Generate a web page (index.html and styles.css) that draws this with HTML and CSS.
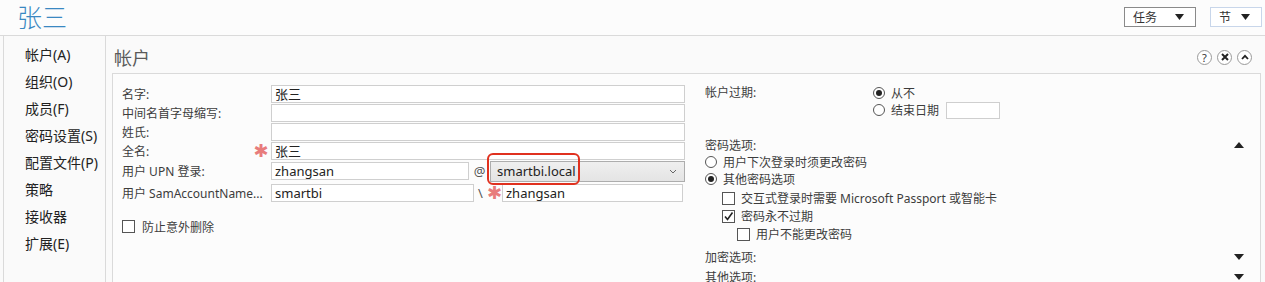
FILE: index.html
```html
<!DOCTYPE html>
<html lang="zh-CN">
<head>
  <meta charset="UTF-8" />
  <title>张三 - 属性</title>
  <link rel="stylesheet" href="styles.css">
</head>
<body>

  <header class="topbar">
    <h1 class="user-name">张三</h1>
    <div class="top-actions">
      <button class="drop drop-task">任务
        <svg class="tri" width="9" height="6" viewBox="0 0 9 6"><polygon points="0,0 9,0 4.5,6" /></svg>
      </button>
      <button class="drop drop-section">节
        <svg class="tri" width="9" height="6" viewBox="0 0 9 6"><polygon points="0,0 9,0 4.5,6" /></svg>
      </button>
    </div>
  </header>

  <div class="main">
    <nav class="side-nav">
      <a class="nav-item">帐户(A)</a>
      <a class="nav-item">组织(O)</a>
      <a class="nav-item">成员(F)</a>
      <a class="nav-item">密码设置(S)</a>
      <a class="nav-item">配置文件(P)</a>
      <a class="nav-item">策略</a>
      <a class="nav-item">接收器</a>
      <a class="nav-item">扩展(E)</a>
    </nav>

    <section class="content">
      <div class="content-head">
        <h2 class="section-title">帐户</h2>
        <div class="head-icons">
          <span class="circle-btn help">?</span>
          <span class="circle-btn">
            <svg width="8" height="8" viewBox="0 0 8 8"><path d="M1 1 L7 7 M7 1 L1 7" stroke="#222" stroke-width="2" /></svg>
          </span>
          <span class="circle-btn">
            <svg width="8" height="6" viewBox="0 0 8 6"><path d="M1 5 L4 1.8 L7 5" stroke="#222" stroke-width="1.8" fill="none" /></svg>
          </span>
        </div>
      </div>

      <div class="panel">
        <div class="col-left">
          <div class="form-row">
            <label class="field-label">名字:</label>
            <span class="req"></span>
            <input class="text-input wide" type="text" value="张三">
          </div>
          <div class="form-row">
            <label class="field-label">中间名首字母缩写:</label>
            <span class="req"></span>
            <input class="text-input wide" type="text" value="">
          </div>
          <div class="form-row">
            <label class="field-label">姓氏:</label>
            <span class="req"></span>
            <input class="text-input wide" type="text" value="">
          </div>
          <div class="form-row">
            <label class="field-label">全名:</label>
            <span class="req">✱</span>
            <input class="text-input wide" type="text" value="张三">
          </div>
          <div class="form-row tall">
            <label class="field-label">用户 UPN 登录:</label>
            <span class="req"></span>
            <input class="text-input upn" type="text" value="zhangsan">
            <span class="sep at">@</span>
            <div class="combo-wrap">
              <div class="combo">
                <span>smartbi.local</span>
                <svg width="8" height="5" viewBox="0 0 8 5"><path d="M1 1 L4 4 L7 1" stroke="#666" stroke-width="1" fill="none" /></svg>
              </div>
              <div class="highlight"></div>
            </div>
          </div>
          <div class="form-row tall">
            <label class="field-label">用户 SamAccountName...</label>
            <span class="req"></span>
            <input class="text-input domain" type="text" value="smartbi">
            <span class="sep slash">\</span>
            <span class="req small-req">✱</span>
            <input class="text-input sam" type="text" value="zhangsan">
          </div>
          <div class="form-row check-row protect">
            <span class="checkbox"></span>
            <span class="check-text">防止意外删除</span>
          </div>
        </div>

        <div class="col-right">
          <div class="expiry">
            <span class="expiry-label">帐户过期:</span>
            <div class="expiry-options">
              <div class="opt-row">
                <span class="radio checked"></span>
                <span class="opt-text">从不</span>
              </div>
              <div class="opt-row">
                <span class="radio"></span>
                <span class="opt-text">结束日期</span>
                <input class="date-input" type="text" value="">
              </div>
            </div>
          </div>

          <div class="group-head first">
            <span>密码选项:</span>
            <svg width="10" height="6" viewBox="0 0 10 6"><polygon points="0,6 10,6 5,0" /></svg>
          </div>
          <div class="opt-row">
            <span class="radio"></span>
            <span class="opt-text">用户下次登录时须更改密码</span>
          </div>
          <div class="opt-row">
            <span class="radio checked"></span>
            <span class="opt-text">其他密码选项</span>
          </div>
          <div class="opt-row indent-1 first-check">
            <span class="checkbox"></span>
            <span class="opt-text">交互式登录时需要 Microsoft Passport 或智能卡</span>
          </div>
          <div class="opt-row indent-1">
            <span class="checkbox">
              <svg width="11" height="11" viewBox="0 0 11 11"><path d="M2 5.5 L4.5 8.5 L9.5 1.5" stroke="#222" stroke-width="1.6" fill="none" /></svg>
            </span>
            <span class="opt-text">密码永不过期</span>
          </div>
          <div class="opt-row indent-2">
            <span class="checkbox"></span>
            <span class="opt-text">用户不能更改密码</span>
          </div>

          <div class="group-head encrypt">
            <span>加密选项:</span>
            <svg width="10" height="6" viewBox="0 0 10 6"><polygon points="0,0 10,0 5,6" /></svg>
          </div>
          <div class="group-head other">
            <span>其他选项:</span>
            <svg width="10" height="6" viewBox="0 0 10 6"><polygon points="0,0 10,0 5,6" /></svg>
          </div>
        </div>
      </div>
    </section>
  </div>

</body>
</html>
```

FILE: styles.css
```css
:root {
  --color-bg: #fafafa;
  --color-line: #dadada;
  --color-title: #3a88c2;
  --color-text: #222;
  --color-label: #3c3c3c;
  --color-input-border: #cfcfcf;
  --color-req: #e87c7c;
  --font-main: "Noto Sans", "Noto Sans CJK SC", sans-serif;
}

* {
  box-sizing: border-box;
}

body {
  margin: 0;
  background-color: var(--color-bg);
  font-family: var(--font-main);
  color: var(--color-text);
  height: 282px;
  overflow: hidden;
  display: flex;
  flex-direction: column;
}

/* top bar */
.topbar {
  height: 36px;
  flex-shrink: 0;
  border-bottom: 1px solid var(--color-line);
  background: #fcfcfc;
  display: flex;
  align-items: flex-start;
  justify-content: space-between;
  padding-left: 17px;
  padding-right: 3px;
}

.user-name {
  margin: 0;
  font-size: 25px;
  font-weight: 300;
  line-height: 34px;
  color: var(--color-title);
}

.top-actions {
  display: flex;
  gap: 14px;
  padding-top: 7px;
}

.drop {
  height: 20px;
  display: flex;
  align-items: center;
  justify-content: space-between;
  padding: 0 11px 0 8px;
  font-family: var(--font-main);
  font-size: 12px;
  color: #333;
  background: #fff;
  border: 1px solid #8a8a8a;
}

.drop-task {
  width: 72px;
}

.drop-section {
  width: 52px;
  border-color: #c8d6ea;
}

.tri polygon {
  fill: #222;
}

/* main area */
.main {
  flex: 1;
  display: flex;
  margin-left: 3px;
  border-left: 1px solid var(--color-line);
  min-height: 0;
}

.side-nav {
  width: 102px;
  flex-shrink: 0;
  border-right: 1px solid var(--color-line);
  padding: 5px 0 0 21px;
  display: flex;
  flex-direction: column;
}

.nav-item {
  font-size: 14px;
  line-height: 27px;
  color: var(--color-text);
  white-space: nowrap;
}

.content {
  flex: 1;
  display: flex;
  flex-direction: column;
  min-height: 0;
  padding: 0 4px 0 6px;
}

.content-head {
  height: 37px;
  flex-shrink: 0;
  display: flex;
  align-items: center;
  justify-content: space-between;
  padding-top: 5px;
}

.section-title {
  margin: 0 0 0 2px;
  font-size: 18px;
  font-weight: 400;
  color: #5a5a5a;
}

.head-icons {
  display: flex;
  gap: 5px;
  margin-right: 9px;
}

.circle-btn {
  width: 15px;
  height: 15px;
  border: 1px solid #9a9a9a;
  border-radius: 50%;
  display: flex;
  align-items: center;
  justify-content: center;
  background: #fff;
  font-size: 11px;
  line-height: 1;
  color: #333;
}

/* panel */
.panel {
  flex: 1;
  min-height: 0;
  overflow: hidden;
  display: flex;
  border: 1px solid var(--color-line);
  border-bottom: none;
  background: #fcfcfc;
}

.col-left {
  width: 582px;
  flex-shrink: 0;
  padding: 10px 0 0 9px;
}

.form-row {
  display: flex;
  align-items: center;
  height: 19px;
}

.form-row.tall {
  height: 22px;
}

.field-label {
  width: 129px;
  font-size: 12px;
  color: var(--color-label);
  white-space: nowrap;
}

.req {
  width: 20px;
  text-align: center;
  font-family: "DejaVu Sans", sans-serif;
  font-size: 18px;
  line-height: 1;
  color: var(--color-req);
}

.small-req {
  width: 15px;
}

.text-input {
  height: 18px;
  border: 1px solid var(--color-input-border);
  background: #fff;
  padding: 0 3px;
  font-family: var(--font-main);
  font-size: 13px;
  color: var(--color-text);
  outline: none;
}

.text-input.wide {
  width: 414px;
}

.text-input.upn {
  width: 198px;
}

.text-input.domain {
  width: 203px;
}

.text-input.sam {
  width: 181px;
}

.sep {
  font-size: 13px;
  color: #555;
  text-align: center;
}

.sep.at {
  width: 21px;
}

.sep.slash {
  width: 13px;
}

.combo-wrap {
  position: relative;
}

.combo {
  width: 195px;
  height: 21px;
  border: 1px solid #adadad;
  background: linear-gradient(#efefef, #e4e4e4);
  display: flex;
  align-items: center;
  justify-content: space-between;
  padding: 0 7px 0 6px;
  font-size: 13px;
  color: var(--color-text);
}

.highlight {
  position: absolute;
  left: -3px;
  top: -8px;
  width: 93px;
  height: 32px;
  border: 2px solid #e0311f;
  border-radius: 6px;
}

.check-row.protect {
  margin-top: 13px;
}

.checkbox {
  width: 13px;
  height: 13px;
  border: 1px solid #555;
  background: #fff;
  display: flex;
  align-items: center;
  justify-content: center;
  flex-shrink: 0;
}

.check-text {
  margin-left: 7px;
  font-size: 12px;
  color: var(--color-label);
}

/* right column */
.col-right {
  flex: 1;
  padding: 10px 16px 0 10px;
  font-size: 12px;
  color: var(--color-label);
}

.expiry {
  display: flex;
}

.expiry-label {
  width: 168px;
  line-height: 17px;
}

.opt-row {
  display: flex;
  align-items: center;
  height: 17px;
}

.opt-text {
  margin-left: 6px;
  white-space: nowrap;
}

.radio {
  width: 12px;
  height: 12px;
  border: 1px solid #555;
  border-radius: 50%;
  background: #fff;
  display: flex;
  align-items: center;
  justify-content: center;
  flex-shrink: 0;
}

.radio.checked::after {
  content: "";
  width: 6px;
  height: 6px;
  border-radius: 50%;
  background: #222;
}

.date-input {
  width: 54px;
  height: 17px;
  margin-left: 7px;
  margin-top: 1px;
  border: 1px solid var(--color-input-border);
  background: #fff;
}

.group-head {
  display: flex;
  align-items: center;
  justify-content: space-between;
  height: 17px;
}

.group-head svg {
  fill: #222;
}

.group-head.first {
  margin-top: 18px;
}

.group-head.encrypt {
  margin-top: 5px;
}

.group-head.other {
  margin-top: 3px;
}

.opt-row.first-check {
  margin-top: 2px;
}

.opt-row.indent-1 {
  height: 18px;
  padding-left: 17px;
}

.opt-row.indent-2 {
  height: 18px;
  padding-left: 32px;
}
```
